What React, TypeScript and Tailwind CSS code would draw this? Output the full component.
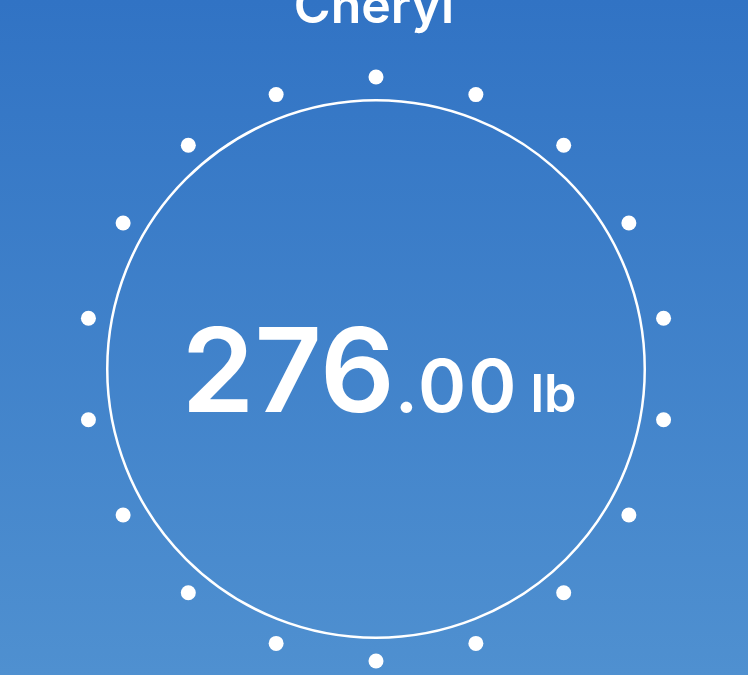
const dots = Array.from({ length: 18 }, (_, i) => {
  const a = (i * 20 * Math.PI) / 180
  return { x: 300 + 292 * Math.sin(a), y: 300 - 292 * Math.cos(a) }
})

function Dial() {
  return (
    <svg className="absolute inset-0" width="600" height="600" viewBox="0 0 600 600">
      <circle cx="300" cy="300" r="268.75" fill="none" stroke="#ffffff" strokeWidth="2.5" />
      {dots.map((d, i) => (
        <circle key={i} cx={d.x} cy={d.y} r="7.5" fill="#ffffff" />
      ))}
    </svg>
  )
}

export default function App() {
  return (
    <div className="w-[748px] h-[675px] overflow-hidden bg-gradient-to-b from-[#3173c4] to-[#4f90d0] flex flex-col items-center font-['Inter','Liberation_Sans',sans-serif] text-white">
      <div className="h-[69px] w-full flex justify-center">
        <h1 className="-mt-[20px] text-[50px] leading-none font-semibold">Cheryl</h1>
      </div>
      <div className="relative w-[600px] h-[600px] ml-[4px] shrink-0">
        <Dial />
        <div className="absolute inset-0 flex items-center justify-center">
          <div className="flex items-baseline leading-none font-semibold ml-[6px]">
            <span className="text-[117px]">276</span>
            <span className="text-[73px] tracking-[2px]">.00</span>
            <span className="text-[52px] ml-[12px]">lb</span>
          </div>
        </div>
      </div>
    </div>
  )
}
